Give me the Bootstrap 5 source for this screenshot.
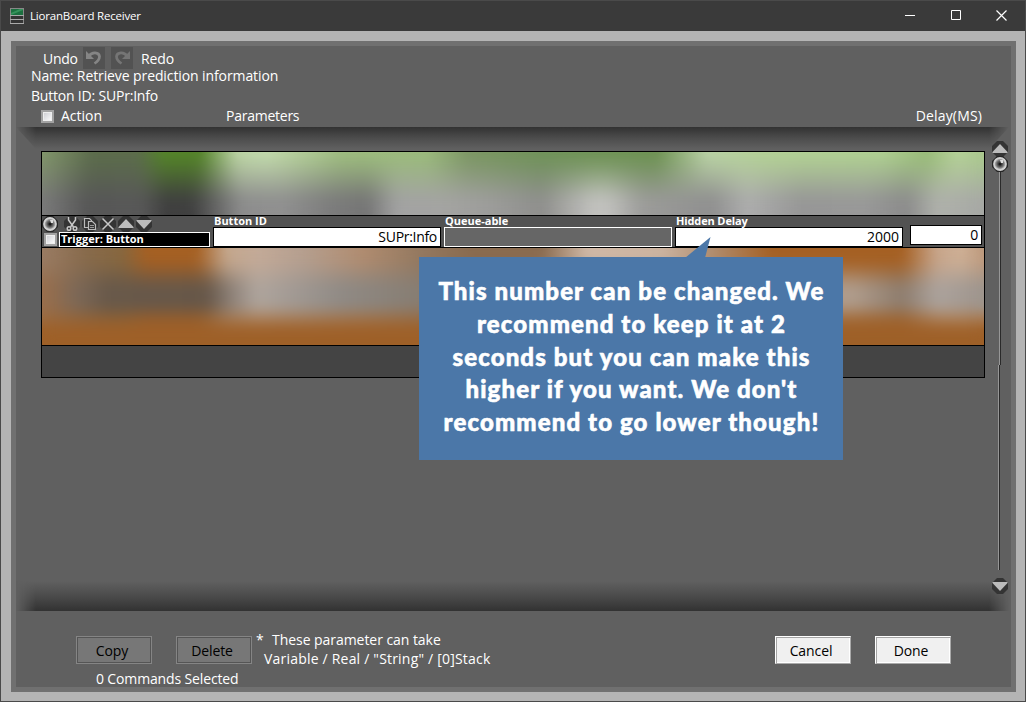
<!DOCTYPE html>
<html lang="en">
<head>
<meta charset="utf-8">
<meta name="viewport" content="width=device-width, initial-scale=1">
<title>LioranBoard Receiver</title>
<link href="https://cdn.jsdelivr.net/npm/bootstrap@5.3.0/dist/css/bootstrap.min.css" rel="stylesheet">
<style>
body{font:14px/20px "Open Sans","Noto Sans",sans-serif;color:#fff;letter-spacing:-.1px;overflow:hidden}
svg{display:block;flex:none}
.app-window{width:1026px;height:702px;background:#b4b4b4;border:1px solid #4a4a4a}
.title-bar{height:30px;background:#3a3a3a;font-size:11.5px;letter-spacing:-.2px;padding:0 0 1px 9px}
.win-btns{padding-right:18px}
.win-btns svg{margin-left:34.5px}
.frame{width:1005px;height:651px;margin:10px 0 0 10px;border:5px solid #707070;background:#606060}
.head{height:81px;padding-top:1px}
.history{height:22px;padding-left:27px;line-height:24px}
.hist-btn{width:22px;height:22px;background:#525252}
.redo-btn{margin:0 8px 0 6px}
.check{width:13px;height:13px;border:2px solid #a2a2a2;background:linear-gradient(135deg,#c9cacf,#fff);box-shadow:inset 0 0 0 1px #eee}
.stage{height:484px;position:relative}
.stage::before,.stage::after{content:"";position:absolute;left:0;right:2px;-webkit-mask-image:linear-gradient(90deg,transparent,#000 20px,#000 calc(100% - 20px),transparent);mask-image:linear-gradient(90deg,transparent,#000 20px,#000 calc(100% - 20px),transparent)}
.stage::before{top:0;height:22px;background:linear-gradient(#323232,#4c4c4c 50%,#606060);clip-path:polygon(0 0,100% 0,calc(100% - 20px) 100%,20px 100%)}
.stage::after{bottom:0;height:30px;background:linear-gradient(#606060,#4b4b4b 50%,#323232)}
.commands{width:944px;height:227px;margin:24px 0 0 25px;border:1px solid #000;background:#444;position:relative;z-index:1}
.smear{position:relative;overflow:hidden;border-bottom:1px solid #000}
.smear>div{position:absolute;inset:0}
.smear::after{content:"";position:absolute;inset:0;-webkit-backdrop-filter:blur(7px);backdrop-filter:blur(7px)}
.smear-green{height:64px}
.smear-orange{height:98px}
.g1{background:linear-gradient(90deg,#82966c,#5c6c4c 50px,#5c6c4c 95px,#54832a 122px,#54832a 158px,#bbd3a4 195px,#c1d8ab 225px,#9dbb7f 300px,#9aba7c 385px,#7d9765 425px,#70925a 500px,#6e9253 615px,#b9d1a5 665px,#b3d096 720px,#aece91 840px,#98bb78 885px,#b5d198 915px,#a9c78d)}
.g2{background:linear-gradient(90deg,#7b7b7b,#575757 45px,#585858 100px,#3f3f3f 125px,#404040 150px,#8d8d8d 200px,#909090 240px,#7c7c7c 290px,#757575 325px,#a2a2a2 355px,#a4a4a2 400px,#9c9c9a 450px,#8e8e8c 500px,#c0c0bd 550px,#c1c1be 565px,#9c9c9a 600px,#8f8f8f 670px,#adadad 705px,#969696 760px,#999 820px,#8b8b8b 865px,#afb1ab 895px,#a6a8a4);-webkit-mask-image:linear-gradient(transparent 8%,rgba(0,0,0,.5) 42%,#000 75%);mask-image:linear-gradient(transparent 8%,rgba(0,0,0,.5) 42%,#000 75%)}
.o1{background:linear-gradient(90deg,#9a7c64,#876a4b 45px,#86673f 80px,#a56023 105px,#a56023 155px,#c4a78d 185px,#c3aa98 215px,#b59f8f 260px,#b08c70 320px,#93785f 380px,#8a6b4f 430px,#8a6b4f 500px,#cfb8a6 545px,#cbb3a0 620px,#b08d6f 670px,#a56023 730px,#a56023 860px,#c7a58b 895px,#ceb096 920px,#bb977a)}
.o2{background:linear-gradient(90deg,#9b6f4b,#7c6857 35px,#68594a 65px,#665749 165px,#8e8279 190px,#afa59d 215px,#a29a94 250px,#8f8a85 300px,#857b70 390px,#80776b 450px,#96908a 550px,#a09488 700px,#b09d8d 810px,#8d7c6d 860px,#aca39d 895px,#9d948c);-webkit-mask-image:linear-gradient(transparent 14%,#000 40%,#000 60%,transparent 84%);mask-image:linear-gradient(transparent 14%,#000 40%,#000 60%,transparent 84%)}
.o3{background:#9e6028;-webkit-mask-image:linear-gradient(transparent 60%,#000 84%);mask-image:linear-gradient(transparent 60%,#000 84%)}
.cmd-row{height:32px;background:#525252;border-bottom:1px solid #000}
.tools{width:171px}
.icons{height:16px}
.check-sm{width:13px;height:13px;margin:1px 2px 0 2px}
.trigger{width:151px;height:15px;background:#000;border:1px solid #fff;padding-left:1px}
.tiny{font-weight:700;font-size:11px;line-height:11px;letter-spacing:0}
.label{height:11px;line-height:10px;padding-left:1px}
.field{width:228px;height:20px;background:#fff;border:1px solid #000;color:#000;text-align:right;padding-right:3px;line-height:17px;letter-spacing:-.3px}
.params{gap:3px}
.field.off{background:#666;border-color:#fff}
.delay{width:72px;margin:9px 0 0 7px}
.scroller{position:absolute;left:975px;top:14px;width:17px;z-index:1}
.rail{width:3px;border-left:1px solid #969696;background:linear-gradient(90deg,#2a2a2a 1px,transparent 1px);margin-left:1px}
.callout{position:absolute;left:403px;top:130px;width:424px;height:203px;background:#4b77a8;z-index:3;font:900 24px/32.8px Lato,"Open Sans",sans-serif;letter-spacing:1.12px;text-align:center;padding:18px 0 0 1px;-webkit-text-stroke:.6px #fff;white-space:nowrap}
.callout svg{position:absolute;left:266px;top:-21px}
.foot{padding:25px 60px 0;height:76px}
.sunk{width:76px;height:28px;border-radius:0;padding:0 4px 0 0;font-size:14px;line-height:25px;color:#000;background:#777;border:1px solid #858585;box-shadow:inset 1px 1px #555,inset -1px -1px #555;display:block;letter-spacing:-.1px}
.sunk:hover{background:#777;color:#000}
.sunk.lit{background:#f0f0f0;border-color:#fff #aaa #aaa #fff;box-shadow:inset 1px 1px #a4a4a4,inset -1px -1px #fff}
</style>
</head>
<body>
<svg width="0" height="0" class="position-absolute">
  <defs>
    <symbol id="disc" viewBox="0 0 16 16"><path d="M5 0h6l5 5v6l-5 5H5l-5-5V5z" fill="#343434"/></symbol>
    <symbol id="dial" viewBox="0 0 16 16"><path d="M5 0h6l5 5v6l-5 5H5l-5-5V5z" fill="#262626"/><circle cx="8" cy="8" r="6" fill="#999" stroke="#d2d2d2" stroke-width="1.8"/><circle cx="8" cy="8" r="3.5" fill="#4c4c4c" stroke="#777"/><circle cx="8" cy="8" r="1.6" fill="#181818"/><path d="M8 4h3v3H9z" fill="#ddd"/></symbol>
    <symbol id="up" viewBox="0 0 16 16"><use href="#disc"/><path d="M8 3l7.5 8v1H.5v-1z" fill="#bcbcbc"/></symbol>
    <symbol id="down" viewBox="0 0 16 16"><use href="#disc"/><path d="M8 13L.5 5V4h15v1z" fill="#bcbcbc"/></symbol>
  </defs>
</svg>
<div class="app-window">
  <header class="title-bar d-flex align-items-center">
    <svg width="14" height="16" viewBox="0 0 14 16"><path d="M0 0h14v16H0z" fill="#888"/><path d="M1 1h12v6H1z" fill="#1c7040"/><path d="M1 7V5l9-4h3v1z" fill="#36935b"/><path d="M1 8h12v3H1zM1 12h12v3H1z" fill="#343434"/><path d="M0 7.500h14M0 11.500h14M0 15.500h14" stroke="#aaa"/></svg>
    <span style="margin-left:6px">LioranBoard Receiver</span>
    <div class="win-btns d-flex ms-auto">
      <svg width="11" height="11"><path d="M0 5.500h10" stroke="#fff"/></svg>
      <svg width="11" height="11"><path d="M.5.5h9v9h-9z" fill="none" stroke="#fff"/></svg>
      <svg width="11" height="11"><path d="M.5.5l10 10M10.500.5l-10 10" stroke="#fff" stroke-width="1.200"/></svg>
    </div>
  </header>
  <main class="frame">
    <section class="head">
      <div class="history d-flex">
        <span style="width:40px;letter-spacing:-.3px">Undo</span>
        <div class="hist-btn"><svg width="22" height="22" viewBox="0 0 22 22"><path d="M6 9C9 4.500 16 5 16.500 9.500c0 3-2 5-5 7" fill="none" stroke="#858585" stroke-width="2.700"/><path d="M3 4v8h8z" fill="#858585"/></svg></div>
        <div class="hist-btn redo-btn"><svg width="22" height="22" viewBox="0 0 22 22"><path d="M16 9C13 4.500 6 5 5.500 9.500c0 3 2 5 5 7" fill="none" stroke="#757575" stroke-width="2.700"/><path d="M19 4v8h-8z" fill="#757575"/></svg></div>
        <span>Redo</span>
      </div>
      <div style="padding-left:15px;margin-top:-3px">Name: Retrieve prediction information</div>
      <div style="padding-left:15px;letter-spacing:-.2px">Button ID: SUPr:Info</div>
      <div class="d-flex align-items-center">
        <span class="check" style="margin-left:25px"></span>
        <span style="margin-left:7px;width:165px;letter-spacing:0">Action</span>
        <span style="letter-spacing:-.25px">Parameters</span>
        <span class="ms-auto" style="padding-right:29px;letter-spacing:.15px">Delay(MS)</span>
      </div>
    </section>

    <section class="stage d-flex">
      <div class="commands">
        <div class="smear smear-green"><div class="g1"></div><div class="g2"></div></div>
        <div class="cmd-row d-flex">
          <div class="tools">
            <div class="icons d-flex">
              <svg width="16" height="16"><use href="#dial"/></svg>
              <svg class="ms-1" width="18" height="16" viewBox="-2 0 18 16"><use href="#disc" width="16" height="16"/><g fill="none" stroke="#c8c8c8" stroke-width="1.500"><path d="M4.500 1v3l5 7M11.500 1v3l-5 7"/><circle cx="5" cy="12.500" r="1.800"/><circle cx="11" cy="12.500" r="1.800"/></g></svg>
              <svg width="18" height="16" viewBox="-2 0 18 16"><use href="#disc" width="16" height="16"/><g fill="#343434" stroke="#bbb" stroke-width="1.200"><path d="M2.500 2.500h5l2 2v7h-7z"/><path d="M6.500 5.500h4l3 3v5h-7z"/><path d="M8 9.500h4M8 11.500h4" stroke="#999"/></g></svg>
              <svg width="18" height="16" viewBox="-2 0 18 16"><use href="#disc" width="16" height="16"/><path d="M2.500 2.500l11 11M13.500 2.500l-11 11" stroke="#c8c8c8" stroke-width="1.500"/></svg>
              <svg width="18" height="16" viewBox="-2 0 18 16"><use href="#up" width="16" height="16"/></svg>
              <svg width="18" height="16" viewBox="-2 0 18 16"><use href="#down" width="16" height="16"/></svg>
            </div>
            <div class="d-flex"><span class="check check-sm"></span><div class="trigger tiny">Trigger: Button</div></div>
          </div>
          <div class="params d-flex">
            <div><div class="tiny label">Button ID</div><div class="field">SUPr:Info</div></div>
            <div><div class="tiny label">Queue-able</div><div class="field off"></div></div>
            <div><div class="tiny label" style="letter-spacing:-.13px">Hidden Delay</div><div class="field" style="letter-spacing:0">2000</div></div>
          </div>
          <div class="field delay">0</div>
        </div>
        <div class="smear smear-orange"><div class="o1"></div><div class="o2"></div><div class="o3"></div></div>
      </div>
      <div class="scroller d-flex flex-column align-items-center">
        <svg width="16" height="16"><use href="#up"/></svg>
        <svg width="16" height="16" style="margin-top:-1px"><use href="#dial"/></svg>
        <div class="rail" style="height:193px"></div>
        <div class="rail" style="height:205px;margin-left:-1px"></div>
        <svg width="16" height="16" style="margin-top:8px"><use href="#down"/></svg>
      </div>
      <div class="callout">
        <svg width="27" height="22"><path d="M0 22L25.500 1 20 22z" fill="#4b77a8"/></svg>
        This number can be changed. We<br>recommend to keep it at 2<br>seconds but you can make this<br>higher if you want. We don't<br>recommend to go lower though!
      </div>
    </section>

    <footer class="foot d-flex">
      <div>
        <div class="d-flex gap-4"><button class="btn sunk" type="button">Copy</button><button class="btn sunk" type="button">Delete</button></div>
        <div style="padding:5px 0 0 20px;letter-spacing:-.14px">0 Commands Selected</div>
      </div>
      <div style="margin:-6px 0 0 4px;line-height:19px;letter-spacing:.2px">
        <div class="d-flex" style="letter-spacing:-.05px"><span style="width:16px">*</span><span>These parameter can take</span></div>
        <div style="padding-left:8px">Variable / Real / "String" / [0]Stack</div>
      </div>
      <div class="d-flex gap-4 ms-auto"><button class="btn sunk lit" type="button">Cancel</button><button class="btn sunk lit" type="button">Done</button></div>
    </footer>
  </main>
</div>
<script src="https://cdn.jsdelivr.net/npm/bootstrap@5.3.0/dist/js/bootstrap.bundle.min.js"></script>
</body>
</html>
